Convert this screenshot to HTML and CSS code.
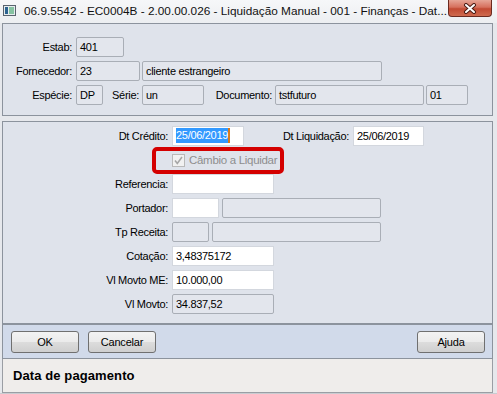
FILE: index.html
```html
<!DOCTYPE html>
<html>
<head>
    <title>Liquidação Manual</title>
    <meta name="viewport" content="width=device-width, initial-scale=1">
    <link rel="stylesheet" href="styles.css">
</head>
<body>
    <div class="window">
        <div class="titlebar">
            <svg class="app-icon" width="13" height="11" viewBox="0 0 13 11">
                <rect x="0.5" y="0.5" width="12" height="10" fill="#e6ecef" stroke="#59636e"/>
                <rect x="2" y="2" width="3" height="7" fill="#2c6390"/>
                <rect x="6" y="2" width="5" height="7" fill="#86c3a2"/>
            </svg>
            <span class="title">06.9.5542 - EC0004B - 2.00.00.026 - Liquidação Manual - 001 - Finanças - Dat...</span>
            <div class="close-btn">
                <svg width="14" height="11" viewBox="0 0 14 11">
                    <path d="M3 2 L11 9 M11 2 L3 9" stroke="#4a1b14" stroke-width="4" stroke-linecap="round"/>
                    <path d="M3 2 L11 9 M11 2 L3 9" stroke="#fff" stroke-width="2" stroke-linecap="round"/>
                </svg>
            </div>
        </div>

        <div class="client">
            <!-- Header: document data -->
            <div class="panel head">
                <div class="row">
                    <span class="lbl lbl-head">Estab:</span>
                    <span class="fld ro w48">401</span>
                </div>
                <div class="row">
                    <span class="lbl lbl-head">Fornecedor:</span>
                    <span class="fld ro w64 mr2">23</span>
                    <span class="fld ro w240">cliente estrangeiro</span>
                </div>
                <div class="row">
                    <span class="lbl lbl-head">Espécie:</span>
                    <span class="fld ro w27">DP</span>
                    <span class="lbl lbl-serie">Série:</span>
                    <span class="fld ro w62">un</span>
                    <span class="lbl lbl-doc">Documento:</span>
                    <span class="fld ro w149 mr2">tstfuturo</span>
                    <span class="fld ro w42">01</span>
                </div>
            </div>

            <!-- Payment data -->
            <div class="panel body-panel">
                <div class="row">
                    <span class="lbl lbl-main">Dt Crédito:</span>
                    <span class="fld w72"><span class="sel">25/06/2019</span></span>
                    <span class="lbl lbl-liq">Dt Liquidação:</span>
                    <span class="fld w71">25/06/2019</span>
                </div>
                <div class="row">
                    <div class="mark-box">
                        <svg class="check" width="13" height="13" viewBox="0 0 13 13">
                            <rect x="0.5" y="0.5" width="12" height="12" fill="#f1f1f1" stroke="#b9b9b9"/>
                            <path d="M3 6.5 L5.3 9.5 L10 3" fill="none" stroke="#a6a6a6" stroke-width="1.6"/>
                        </svg>
                        <span class="check-text">Câmbio a Liquidar</span>
                    </div>
                </div>
                <div class="row">
                    <span class="lbl lbl-main">Referencia:</span>
                    <span class="fld w102"></span>
                </div>
                <div class="row">
                    <span class="lbl lbl-main">Portador:</span>
                    <span class="fld w47 mr3"></span>
                    <span class="fld ro w159"></span>
                </div>
                <div class="row">
                    <span class="lbl lbl-main">Tp Receita:</span>
                    <span class="fld ro w37 mr3"></span>
                    <span class="fld ro w169"></span>
                </div>
                <div class="row">
                    <span class="lbl lbl-main">Cotação:</span>
                    <span class="fld w102">3,48375172</span>
                </div>
                <div class="row">
                    <span class="lbl lbl-main">Vl Movto ME:</span>
                    <span class="fld w102">10.000,00</span>
                </div>
                <div class="row">
                    <span class="lbl lbl-main">Vl Movto:</span>
                    <span class="fld ro w102">34.837,52</span>
                </div>
            </div>

            <!-- Buttons -->
            <div class="button-bar">
                <div class="btn-group">
                    <button class="btn" type="button">OK</button>
                    <button class="btn" type="button">Cancelar</button>
                </div>
                <button class="btn" type="button">Ajuda</button>
            </div>

            <div class="status-bar">Data de pagamento</div>
        </div>
    </div>
</body>
</html>
```

FILE: styles.css
```css
* { box-sizing: border-box; }
body { margin:0; width:497px; height:394px; overflow:hidden; background:#c9ccd1; font-family:"Liberation Sans", Arial, sans-serif; font-size:11px; letter-spacing:-0.3px; color:#000; }
.window { height:393px; background:#e6e8ec; }

.titlebar { height:23px; display:flex; align-items:flex-start; background:linear-gradient(#f6f7f9, #eceef1); }
.app-icon { margin:5px 0 0 3px; flex:none; }
.title { margin:4px 0 0 8px; font-size:11.8px; letter-spacing:0; white-space:nowrap; color:#111; }
.close-btn { margin-left:auto; margin-right:5px; width:44px; height:17px; display:flex; align-items:center; justify-content:center; border:1px solid #6b2a20; border-top:none; border-radius:0 0 4px 4px; background:linear-gradient(#e6a596 0%, #d6705d 45%, #c24a33 55%, #cf6a4f 100%); flex:none; }

.client { margin:0 4px 0 2px; }
.panel { background:#dfe3eb; border:1px solid #8c939d; }
.head { padding:13px 0 10px 0; display:flex; flex-direction:column; gap:4px; }
.body-panel { margin-top:5px; padding:4px 0 9px 0; display:flex; flex-direction:column; gap:4px; }

.row { display:flex; align-items:center; height:20px; }
.lbl { flex:none; text-align:right; white-space:nowrap; }
.lbl-head { width:73px; padding-right:4px; }
.lbl-serie { width:39px; padding-right:3px; }
.lbl-doc { width:71px; padding-right:3px; }
.lbl-main { width:169px; padding-right:4px; }
.lbl-liq { width:109px; padding-right:4px; }

.fld { flex:none; height:20px; line-height:18px; padding:0 3px; background:#fff; border:1px solid #d3d7de; white-space:nowrap; overflow:hidden; }
.fld.ro { background:#e3e6ed; border-color:#a9aeb6; border-radius:2px; }
.sel { display:inline-block; height:15px; line-height:15px; margin-top:1px; background:#3399ff; color:#fff; border-right:2px solid #d87a1c; vertical-align:top; }

.mr2 { margin-right:2px; }
.mr3 { margin-right:3px; }
.w27 { width:27px; } .w37 { width:37px; } .w42 { width:42px; } .w47 { width:47px; }
.w48 { width:48px; } .w62 { width:62px; } .w64 { width:64px; } .w71 { width:71px; }
.w72 { width:72px; } .w102 { width:102px; } .w149 { width:149px; } .w159 { width:159px; }
.w169 { width:169px; } .w240 { width:240px; }

.mark-box { margin-left:149px; width:132px; height:27px; flex:none; display:flex; align-items:center; padding-left:16px; border:4px solid #d40000; border-radius:5px; }
.check { flex:none; }
.check-text { margin-left:4px; color:#8e8e8e; font-size:11.5px; white-space:nowrap; }

.button-bar { margin-top:0; height:35px; display:flex; justify-content:space-between; align-items:flex-start; padding:6px 7px 0 8px; background:#d1daea; border:1px solid #8c939d; }
.btn-group { display:flex; gap:9px; }
.btn { width:68px; height:22px; padding:0; font-family:inherit; font-size:11px; letter-spacing:-0.2px; color:#000; border:1px solid #707070; border-radius:3px; background:linear-gradient(#f3f3f3 0%, #ebebeb 48%, #dcdcdc 52%, #cfcfcf 100%); }

.status-bar { height:34px; line-height:34px; padding-left:10px; background:#efedeb; border:1px solid #9a9ea4; border-top:none; font-size:13px; font-weight:bold; letter-spacing:0.1px; }
```
